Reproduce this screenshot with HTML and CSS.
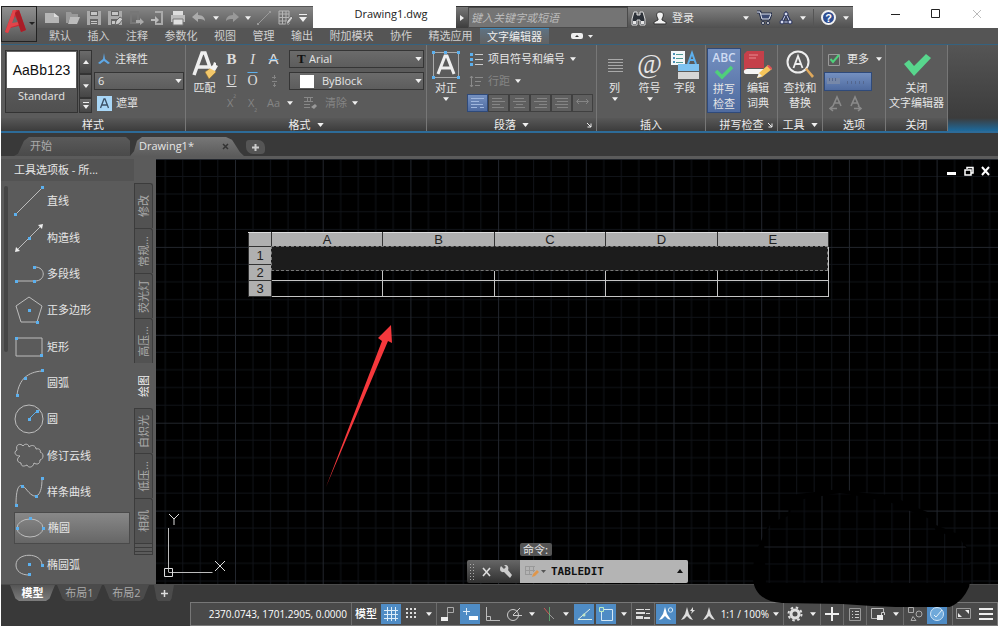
FILE: index.html
```html
<!DOCTYPE html>
<html lang="zh-CN">
<head>
<meta charset="utf-8">
<title>Drawing1.dwg</title>
<link rel="stylesheet" href="styles.css">
</head>
<body>
<svg class="defs" width="0" height="0" aria-hidden="true">
  <symbol id="caret" viewBox="0 0 8 5"><path d="M0 0h8L4 5z" fill="#f0f0f0"/></symbol>
  <symbol id="launch" viewBox="0 0 6 6"><path d="M1 1l4 4M5 1.500V5H1.500" stroke="#eee" fill="none"/></symbol>
</svg>
<div class="app">
  <header class="top">
    <button class="logo" aria-label="应用程序菜单">
      <svg width="34" height="34" viewBox="0 0 34 34"><path d="M3 25L11 3h6l7 20-5 2-2-6-9 2-2 5z" fill="#c92a33"/><path d="M11 3h3l-3 12 6-2 2 4-10 3-3 6-3-1z" fill="#e2444a"/><path d="M13 9l-3 7 6-1z" fill="#6b6b6b"/><path d="M17 3l7 20-5 2-6-19z" fill="#a91d27"/><path d="M27 15h6l-3 3z" fill="#222"/></svg>
    </button>
    <div class="top-rows">
      <div class="titlebar">
        <div class="qat">
          <button aria-label="新建"><svg width="16" height="16"><path d="M1 3h9l5 4v6H1z" fill="#b5b5b5"/><path d="M10 3v4h5" fill="#ddd"/></svg></button>
          <button aria-label="打开"><svg width="16" height="16"><path d="M1 2h5l1 2h6v3H5l-2 6H1z" fill="#999"/><path d="M5 7h10l-3 7H3z" fill="#bbb"/></svg></button>
          <button aria-label="保存"><svg width="16" height="16"><path d="M1 1h14v14H1z" fill="#aaa"/><path d="M4 1h8v5H4zM4 9h8v6H4z" fill="#666"/><path d="M5 2h6v3H5zM5 11h6v1H5zM5 13h6v1H5z" fill="#c5c5c5"/></svg></button>
          <button aria-label="另存为"><svg width="16" height="16"><path d="M1 1h14v14H1z" fill="#aaa"/><path d="M4 1h8v5H4zM4 9h8v6H4z" fill="#666"/><path d="M5 2h6v3H5zM5 11h3v3H5z" fill="#c5c5c5"/><path d="M8 15l1-4 4-4 3 2-4 5z" fill="#ccc" stroke="#666"/></svg></button>
          <button aria-label="从移动设备打开"><svg width="16" height="16"><path d="M3 2h7v11H3z" fill="none" stroke="#777" stroke-width="2"/><path d="M8 10h4V8l4 4-4 3v-2H8z" fill="#aaa"/></svg></button>
          <button aria-label="保存到移动设备"><svg width="16" height="16"><path d="M6 2h7v12H6" fill="none" stroke="#aaa" stroke-width="2"/><path d="M2 9h4V6l4 4-4 4v-3H2z" fill="#bbb"/></svg></button>
          <button aria-label="打印"><svg width="16" height="16"><path d="M3 1h10v5H3z" fill="#ddd"/><path d="M1 5h14v7H1z" fill="#bcbcbc"/><path d="M3 9h10v6H3z" fill="#e0e0e0" stroke="#777"/></svg></button>
          <button aria-label="放弃"><svg width="16" height="16"><path d="M1 7l6-5v3c5 0 7 3 7 6-2-2-4-2-7-2v3z" fill="#aaa"/></svg></button>
          <svg class="c6"><use href="#caret"/></svg>
          <button aria-label="重做"><svg width="16" height="16"><path d="M15 7L9 2v3C4 5 2 8 2 11c2-2 4-2 7-2v3z" fill="#999"/></svg></button>
          <svg class="c6"><use href="#caret"/></svg>
          <button aria-label="直线"><svg width="16" height="16"><path d="M2 14L14 2" stroke="#999"/><path d="M1 13h2v2H1zM13 1h2v2h-2z" fill="#999"/></svg></button>
          <button aria-label="表格"><svg width="16" height="16"><path d="M2 1h10v13H2zM2 4h10M2 7.500h10M2 11h10M5.500 1v13M9 1v13" fill="none" stroke="#b5b5b5"/><path d="M9 15l1-4 4-5 2 2-4 5z" fill="#ccc" stroke="#666"/></svg></button>
          <button aria-label="自定义"><svg width="10" height="12"><path d="M1 2h8v1H1zM1 5h8L5 10z" fill="#eee"/></svg></button>
        </div>
        <div class="doc-title">Drawing1.dwg</div>
        <div class="search">
          <button class="search-open" aria-label="展开"><svg width="5" height="8"><path d="M0 1l4 3-4 3z" fill="#eee"/></svg></button>
          <input type="text" aria-label="搜索" placeholder="键入关键字或短语">
        </div>
        <div class="account">
          <button aria-label="查找"><svg width="15" height="16"><path d="M3 2h3v3h3V2h3l2 7v6H9v-5H6v5H1V9z" fill="#2c3138" stroke="#ddd"/><path d="M2 11h3v3H2zM10 11h3v3h-3z" fill="#e5e5e5"/></svg></button>
          <button class="login"><svg width="14" height="14"><path d="M7 1c3 0 4 2 3 5L9 8v1l4 2v2H1v-2l4-2V8L4 6C3 3 4 1 7 1z" fill="#f3f3f3" stroke="#333"/></svg>登录</button>
          <svg class="c6 login-caret"><use href="#caret"/></svg>
          <button aria-label="商店"><svg width="16" height="16"><path d="M1 2h3l2 7h7l2-5H5" fill="#9faac5" stroke="#222c49" stroke-width="3"/><path d="M1 2h3l2 7h7l2-5H5" fill="#3c4a72" stroke="#e3e7f0"/><circle cx="7" cy="13" r="1.500" fill="#eee" stroke="#222c49"/><circle cx="12" cy="13" r="1.500" fill="#eee" stroke="#222c49"/></svg></button>
          <button aria-label="应用"><svg width="14" height="14"><path d="M7 3l4 8H3z" fill="none" stroke="#28325a" stroke-width="3"/><path d="M7 3l4 8H3z" fill="none" stroke="#d7dcf0"/><circle cx="7" cy="3" r="2" fill="#d7dcf0" stroke="#28325a"/><circle cx="3" cy="11" r="2" fill="#d7dcf0" stroke="#28325a"/><circle cx="11" cy="11" r="2" fill="#d7dcf0" stroke="#28325a"/></svg></button>
          <svg class="c6"><use href="#caret"/></svg>
          <span class="vline"></span>
          <button aria-label="帮助"><svg width="15" height="15"><circle cx="7.500" cy="7.500" r="6.500" fill="#2e4d92" stroke="#f2f2f2" stroke-width="2"/><text x="7.500" y="11.500" text-anchor="middle" class="qmark">?</text></svg></button>
          <svg class="c6"><use href="#caret"/></svg>
        </div>
        <div class="winbtns">
          <button aria-label="最小化"><svg width="10" height="10"><path d="M1 5.500h9" stroke="#222"/></svg></button>
          <button aria-label="最大化"><svg width="10" height="10"><path d="M.5.500h8v8h-8z" fill="none" stroke="#222"/></svg></button>
          <button aria-label="关闭"><svg width="10" height="10"><path d="M1 1l8 8M9 1L1 9" stroke="#bbb"/></svg></button>
        </div>
      </div>
      <nav class="menu">
        <div class="menu-tabs"><button>默认</button><button>插入</button><button>注释</button><button>参数化</button><button>视图</button><button>管理</button><button>输出</button><button>附加模块</button><button>协作</button><button>精选应用</button><button class="active">文字编辑器</button></div>
        <button aria-label="最小化功能区"><svg width="22" height="8"><rect x="0" y="1" width="12" height="6" rx="2" fill="#eee"/><path d="M4 5l2-2 2 2z" fill="#333"/><path d="M17 3h5l-2.500 3z" fill="#eee"/></svg></button>
      </nav>
    </div>
  </header>

  <section class="ribbon">
    <div class="panel p-style">
      <div class="panel-body">
        <div class="preview"><span class="sample">AaBb123</span><span class="sample-name">Standard</span></div>
        <div class="spin">
          <button aria-label="上一个"><svg width="8" height="5"><path d="M1 4h6L4 0z" fill="#eee"/></svg></button>
          <button aria-label="下一个"><svg class="c6"><use href="#caret"/></svg></button>
          <button class="short" aria-label="更多"><svg width="8" height="8"><path d="M1 0h6v1H1zM1 3h6L4 7z" fill="#eee"/></svg></button>
        </div>
        <div class="stack style-opts">
          <button class="row"><svg width="14" height="14"><path d="M7 1l1 6 5 4-2 1-4-3-4 3-2-1 5-4z" fill="#5fa8e6"/></svg>注释性</button>
          <div class="combo"><select aria-label="文字高度"><option>6</option></select><svg class="c8 drop"><use href="#caret"/></svg></div>
          <button class="row"><svg width="15" height="15"><rect width="15" height="15" fill="#a9d7f7"/><path d="M3.500 12L7 3h1l3.500 9M5 9h5" fill="none" stroke="#3c5166" stroke-width="1.300"/></svg>遮罩</button>
        </div>
      </div>
      <h2>样式</h2>
    </div>
    <div class="panel p-format">
      <div class="panel-body">
        <button class="big match"><svg width="28" height="30"><path d="M3 25L11 3h3l7 20M7 17h11" fill="none" stroke="#eee" stroke-width="3.500"/><path d="M14 22l7-5 4 5-7 7z" fill="#f2c76a" stroke="#8a6a2b" stroke-width=".5"/><path d="M18 18l4-3 1-3 2 1v2l2 1-3 5z" fill="#f4f4f4"/></svg>匹配</button>
        <div class="glyphs">
          <button class="serif b">B</button><button class="serif i">I</button><button class="serif s">A</button>
          <button class="serif u">U</button><button class="serif o">O</button><button class="dim" aria-label="堆叠"><svg width="10" height="14"><path d="M5.500 1v4M3 3.500h4M5.500 9v4M3 7.500h5M4 11.500h3" stroke="#858585"/></svg></button>
          <button class="dim">X<sup>²</sup></button><button class="dim">X<sub>₂</sub></button><button class="dim case">Aa</button>
        </div>
        <div class="stack fonts">
          <div class="combo font-name"><select aria-label="字体"><option>Arial</option></select><b class="serif mark">T</b><svg class="c8 drop"><use href="#caret"/></svg></div>
          <div class="combo colour"><select aria-label="颜色"><option>ByBlock</option></select><i class="swatch mark"></i><svg class="c8 drop"><use href="#caret"/></svg></div>
          <button class="row dim clear"><svg class="c6"><use href="#caret"/></svg><svg width="15" height="14"><path d="M1 1.500h9M1 5.500h9M1 8.500h6M1 11.500h6M4.500 2v3M7.500 2v3" stroke="#888"/><path d="M8 11l4-3 2 2-3 3z" fill="#999"/></svg>清除<svg class="c6"><use href="#caret"/></svg></button>
        </div>
      </div>
      <h2>格式 <svg class="c8"><use href="#caret"/></svg></h2>
    </div>
    <div class="panel p-para">
      <div class="panel-body">
        <button class="big"><svg width="30" height="30"><path d="M2.500 2.500h25v25h-25z" fill="none" stroke="#aaa"/><path d="M7 24L14 6h2l7 18M10 18h10" fill="none" stroke="#eee" stroke-width="3"/><path d="M1 1h3v3H1zM13 1h3v3h-3zM26 1h3v3h-3zM1 26h3v3H1zM26 26h3v3h-3z" fill="#5cb0ee"/></svg>对正<svg class="c6"><use href="#caret"/></svg></button>
        <div class="stack para-opts">
          <button class="row"><svg width="14" height="13"><path d="M1 0h3v3H1zM1 5h3v3H1zM1 10h3v3H1z" fill="#5cb0ee"/><path d="M6 1.500h8M6 6.500h8M6 11.500h8" stroke="#ccc"/></svg>项目符号和编号<svg class="c6"><use href="#caret"/></svg></button>
          <button class="row dim"><svg width="14" height="13"><path d="M2.500 1v11M1 3l1.500-2L4 3M1 10l1.500 2L4 10M6 2.500h8M6 6.500h6M6 10.500h5" stroke="#8b8b8b" fill="none"/></svg>行距<svg class="c6"><use href="#caret"/></svg></button>
          <div class="aligns">
            <button class="on" aria-label="默认"><svg width="15" height="12"><path d="M1 1.500h13M1 4.500h8M1 7.500h12M1 10.500h6M10 10.500h4" stroke="#9fb6dd"/></svg></button>
            <button aria-label="左对齐"><svg width="15" height="12"><path d="M1 1.500h10M1 4.500h13M1 7.500h8M1 10.500h12" stroke="#858585"/></svg></button>
            <button aria-label="居中"><svg width="15" height="12"><path d="M3 1.500h9M1 4.500h13M4 7.500h7M2 10.500h11" stroke="#858585"/></svg></button>
            <button aria-label="右对齐"><svg width="15" height="12"><path d="M4 1.500h10M1 4.500h13M6 7.500h8M2 10.500h12" stroke="#858585"/></svg></button>
            <button aria-label="两端对齐"><svg width="15" height="12"><path d="M1 1.500h13M3 4.500h11M1 7.500h13M3 10.500h11" stroke="#858585"/></svg></button>
            <button aria-label="分散对齐"><svg width="15" height="12"><path d="M2 4.500h11M4 2L1.500 4.500 4 7M11 2l2.500 2.500L11 7" fill="none" stroke="#858585"/></svg></button>
          </div>
        </div>
      </div>
      <h2>段落 <svg class="c8"><use href="#caret"/></svg><svg class="launch"><use href="#launch"/></svg></h2>
    </div>
    <div class="panel p-insert">
      <div class="panel-body">
        <button class="big w36"><svg width="30" height="30"><path d="M8 9.500h15M8 12.500h15M8 15.500h15M8 18.500h15M8 21.500h15" stroke="#a9a9a9"/></svg>列<svg class="c6"><use href="#caret"/></svg></button>
        <button class="big w36"><span class="at">@</span>符号<svg class="c6"><use href="#caret"/></svg></button>
        <button class="big w36"><svg width="30" height="30"><path d="M1 1h14v14H1z" fill="#f3f6f8"/><path d="M3 3h2v2H3zM3 7h2v2H3zM3 11h2v2H3z" fill="#4a90b8"/><path d="M6 4.500h7M6 8.500h7M6 12.500h7" stroke="#4e9a94"/><path d="M18 14l4-11 4 11M19.500 10h5" fill="none" stroke="#5cb0ee" stroke-width="2"/><path d="M8 14h21v7H8z" fill="#7ec3f2"/><path d="M8 22h21v7H8z" fill="#d6d6d6"/></svg>字段</button>
      </div>
      <h2>插入</h2>
    </div>
    <div class="panel p-spell">
      <div class="panel-body">
        <button class="big on w34"><span class="abc">ABC</span><svg width="20" height="16"><path d="M2 6l6 6L18 2" fill="none" stroke="#4fd07b" stroke-width="3.500"/></svg>拼写<br>检查</button>
        <button class="big w34"><svg width="30" height="30"><path d="M4 1h17v17H4L1 23V4z" fill="#c5404a"/><path d="M4 19h17v5H3c-3 0-3-5 1-5z" fill="#f5f5f5"/><path d="M6 5h9M6 8h7" stroke="#e98a8f"/><path d="M14 28l2-5 9-8 4 4-10 8z" fill="#f6c65b"/><path d="M24 16l2-1 3 3-1 2z" fill="#e2505a"/><path d="M14 28l2-5 3 3z" fill="#eee"/></svg>编辑<br>词典</button>
      </div>
      <h2>拼写检查<svg class="launch"><use href="#launch"/></svg></h2>
    </div>
    <div class="panel p-tools">
      <div class="panel-body">
        <button class="big"><svg width="30" height="30"><circle cx="13" cy="12" r="10.500" fill="none" stroke="#eee" stroke-width="2"/><path d="M8.500 18L13 6l4.500 12M10 14h6" fill="none" stroke="#eee" stroke-width="1.800"/><path d="M20 19l2-1 7 8-2 2z" fill="#e0a95b"/></svg>查找和<br>替换</button>
      </div>
      <h2>工具 <svg class="c8"><use href="#caret"/></svg></h2>
    </div>
    <div class="panel p-opts">
      <div class="panel-body">
        <div class="stack">
          <button class="row more"><svg width="12" height="13"><path d="M.5 1.500h11v11H.5z" fill="none" stroke="#999"/><path d="M2.500 6L5 9l6-7" fill="none" stroke="#4fd07b" stroke-width="2"/></svg>更多<svg class="c6"><use href="#caret"/></svg></button>
          <button class="ruler" aria-label="标尺"><svg width="42" height="12"><path d="M0 2h13v6H0z" fill="#7788a8"/><path d="M2.500 2v3M5.500 2v3M8.500 2v3M20.500 5v3M24.500 5v3M28.500 5v3M32.500 5v3M36.500 5v3" stroke="#54678f"/></svg></button>
          <div class="aa"><button aria-label="放弃"><svg width="14" height="17"><path d="M4 11L8 2l4 9M5 8h6M1 13.500h7M4 11l-3 2.500L4 16" fill="none" stroke="#8b8b8b" stroke-width="1.600"/></svg></button><button aria-label="重做"><svg width="14" height="17"><path d="M2 11L6 2l4 9M3 8h6M5 13.500h7M9 11l3 2.500L9 16" fill="none" stroke="#8b8b8b" stroke-width="1.600"/></svg></button></div>
        </div>
      </div>
      <h2>选项</h2>
    </div>
    <div class="panel p-close">
      <div class="panel-body">
        <button class="big"><svg width="30" height="30"><path d="M2 14l5-4 5 6L24 4l5 4-17 18z" fill="#58d68d"/></svg>关闭<br>文字编辑器</button>
      </div>
      <h2>关闭</h2>
    </div>
  </section>

  <nav class="file-tabs">
    <button class="ftab start">开始</button>
    <button class="ftab current">Drawing1*<svg width="7" height="7"><path d="M1 1l5 5M6 1L1 6" stroke="#333" stroke-width="1.500"/></svg></button>
    <button class="ftab add" aria-label="新图形"><svg width="9" height="9"><path d="M4.500 1v7M1 4.500h7" stroke="#ccc" stroke-width="2"/></svg></button>
  </nav>

  <main class="work">
    <aside class="palette">
      <h3>工具选项板 - 所...</h3>
      <div class="palette-body">
        <div class="scroll"></div>
        <ul class="tools">
          <li><button><svg viewBox="0 0 30 30"><path d="M2 28L28 2" class="ln"/><path d="M0 27h3v3H0zM27 0h3v3h-3z" class="dt"/></svg>直线</button></li>
          <li><button><svg viewBox="0 0 30 30"><path d="M3 27L27 3" class="ln"/><path d="M29 1l-1 5-4-4zM1 29l1-5 4 4z" fill="#eee"/><path d="M14 14h3v3h-3z" class="dt"/></svg>构造线</button></li>
          <li><button><svg viewBox="0 0 30 30"><path d="M2 22h19M21 8c11 0 11 14 0 14" class="ln"/><path d="M1 21h3v3H1zM19 21h3v3h-3zM19 7h3v3h-3z" class="dt"/></svg>多段线</button></li>
          <li><button><svg viewBox="0 0 30 30"><path d="M15 2l13 9-5 16H7L2 11z" class="ln"/><path d="M14 14h3v3h-3zM22 26h3v3h-3z" class="dt"/></svg>正多边形</button></li>
          <li><button><svg viewBox="0 0 30 30"><path d="M2 6h26v18H2z" class="ln"/><path d="M1 5h3v3H1zM26 22h3v3h-3z" class="dt"/></svg>矩形</button></li>
          <li><button><svg viewBox="0 0 30 30"><path d="M3 27C5 11 14 4 28 3" class="ln"/><path d="M2 26h3v3H2zM10 9h3v3h-3zM27 1h3v3h-3z" class="dt"/></svg>圆弧</button></li>
          <li><button><svg viewBox="0 0 30 30"><circle cx="15" cy="15" r="14" class="ln"/><path d="M15 15l8-8" stroke="#5cb0ee"/><path d="M14 14h3v3h-3zM22 6h3v3h-3z" class="dt"/></svg>圆</button></li>
          <li><button><svg viewBox="0 0 30 30"><path d="M6 15c-6 0-6-5-3-6-2-6 4-7 6-4 2-3 6-2 6 1 3-3 7-1 7 2 4-1 5 2 4 3 4 1 4 7 0 8 0 4-3 5-6 3-1 5-6 5-7 2-4 2-6 1-6-2-5-1-4-5-1-7z" class="ln"/></svg>修订云线</button></li>
          <li><button><svg viewBox="0 0 30 30"><path d="M2 28C2 4 8 7 12 12c4 5 8 9 12 6 3-3 4-9 4-16" class="ln"/><path d="M1 27h3v3H1zM7 8h3v3H7zM21 18h3v3h-3zM27 0h3v3h-3z" class="dt"/></svg>样条曲线</button></li>
          <li class="sel"><button><svg viewBox="0 0 30 30"><ellipse cx="15" cy="15" rx="13" ry="9" class="ln"/><path d="M1 14h3v3H1zM27 14h3v3h-3zM14 4h3v3h-3z" class="dt"/></svg>椭圆</button></li>
          <li><button><svg viewBox="0 0 30 30"><path d="M28 15C28 2 2 2 2 15c0 6 5 10 13 10" class="ln"/><path d="M14 13h3v3h-3zM27 14h3v3h-3zM14 23h3v3h-3z" class="dt"/></svg>椭圆弧</button></li>
        </ul>
        <div class="vtabs">
          <button><span>修改</span></button><button><span>常规...</span></button><button><span>荧光灯</span></button><button><span>高压...</span></button><button class="active"><span>绘图</span></button><button><span>白炽光</span></button><button><span>低压...</span></button><button><span>相机</span></button>
          <i></i><i></i><i></i>
        </div>
      </div>
    </aside>
    <section class="canvas">
      <svg class="grid" width="100%" height="100%">
        <defs><pattern id="g" x="79" y="0" width="87.700" height="87.900" patternUnits="userSpaceOnUse">
          <path d="M18 0v88M35.500 0v88M53 0v88M70.500 0v88M0 17.500h88M0 35h88M0 52.700h88M0 70.300h88" stroke="#101318"/><path d="M.5 0v88M0 .5h88" stroke="#22262d"/>
        </pattern></defs>
        <rect width="100%" height="100%" fill="url(#g)"/>
        <path d="M170 328L226 182l-4-3 13-13 1 18-4-2z" fill="#f5383c"/>
        <path d="M12.500 369v44M12.500 413.500h44" stroke="#bbb"/><path d="M8.500 409.500h8v8h-8z" fill="none" stroke="#ddd"/><path d="M59 402l10 10M69 402l-10 10M13 355l5 5 5-5M18 360v6" fill="none" stroke="#ddd"/>
      </svg>
      <div class="viewbtns">
        <button aria-label="最小化视口"><svg width="10" height="10"><path d="M0 6h9v3H0z" fill="#fff"/></svg></button>
        <button aria-label="还原视口"><svg width="10" height="10"><path d="M1 4h6v5H1zM3 3V1.500h6V7H7" fill="none" stroke="#fff" stroke-width="1.500"/></svg></button>
        <button aria-label="关闭视口"><svg width="10" height="10"><path d="M1 1l7 8M8 1L1 9" stroke="#fff" stroke-width="2"/></svg></button>
      </div>
      <table class="sheet">
        <thead><tr><th class="num"></th><th>A</th><th>B</th><th>C</th><th>D</th><th>E</th></tr></thead>
        <tbody>
          <tr class="r1"><th>1</th><td colspan="5"><div class="merged"></div></td></tr>
          <tr><th>2</th><td></td><td></td><td></td><td></td><td></td></tr>
          <tr><th>3</th><td></td><td></td><td></td><td></td><td></td></tr>
        </tbody>
      </table>
      <div class="cmd-hint">命令:</div>
      <div class="cmd">
        <svg class="grip" width="8" height="18"><path d="M1.500 1v16M4.500 1v16" stroke="#aaa" stroke-dasharray="1 2"/></svg>
        <button aria-label="关闭命令行"><svg width="10" height="10"><path d="M1 1l7 8M8 1L1 9" stroke="#ddd" stroke-width="1.600"/></svg></button>
        <button aria-label="自定义命令行"><svg width="14" height="14"><path d="M2 1l3 3 2-2-2-2c4-1 5 3 4 5l4 5-2 3-6-6C1 8 0 4 2 1z" fill="#ccc"/></svg></button>
        <div class="cmd-field">
          <svg width="22" height="14"><path d="M1 1.500h10M1 5.500h10M1 9.500h7M1.500 1v9M5.500 1v9M9.500 1v6" stroke="#999"/><path d="M8 12l1-3 4-4 2 2-4 4z" fill="#e0964a"/><path d="M17 5h5l-2.500 3z" fill="#555"/></svg>
          <input type="text" aria-label="命令" value="TABLEDIT">
          <svg width="8" height="5"><path d="M1 4h6L4 0z" fill="#111"/></svg>
        </div>
      </div>
      <svg class="blot" width="222" height="118" viewBox="0 0 222 118">
        <defs><pattern id="g2" x="69.500" y="57.500" width="87.700" height="87.900" patternUnits="userSpaceOnUse"><path d="M18 0v88M35.500 0v88M53 0v88M70.500 0v88M0 17.500h88M0 35h88M0 52.700h88M0 70.300h88" stroke="#0d1015"/><path d="M.5 0v88M0 .5h88" stroke="#1d2026"/></pattern></defs>
        <path d="M2 66L10 50l6-14 20-10 2-20 50-6 24 4 28 2 18 10 20 8 6 12 24 10 8 14 3 28-2 10c-5 11-12 19-26 22L120 117l-30-2-60-1C12 113 2 104 1 90z" fill="#000"/>
        <path d="M12 50l6-14 20-10 2-14 48-8 24 4 28 6 18 8 20 8 6 12 24 8 10 14v30H14z" fill="url(#g2)"/>
      </svg>
    </section>
  </main>

  <footer class="bottom">
    <nav class="layouts"><button class="active">模型</button><button>布局1</button><button>布局2</button><button class="plus" aria-label="新建布局"><svg width="9" height="9"><path d="M4.500 1v7M1 4.500h7" stroke="#ddd" stroke-width="1.500"/></svg></button></nav>
    <div class="status">
      <span class="coords">2370.0743, 1701.2905, 0.0000</span>
      <button class="model">模型</button>
      <button class="on" aria-label="栅格"><svg width="16" height="16"><path d="M4.500 1v14M8.500 1v14M12.500 1v14M1 4.500h14M1 8.500h14M1 12.500h14" stroke="#dcecf8"/></svg></button>
      <button class="n" aria-label="捕捉"><svg width="14" height="14"><path d="M2 1v12M6 1v12M10 1v12" stroke="#ddd" stroke-width="2" stroke-dasharray="2 2"/></svg></button>
      <button class="car" aria-label="捕捉设置"><svg class="c6"><use href="#caret"/></svg></button><i></i>
      <button aria-label="推断约束"><svg width="16" height="16"><path d="M1 11h7v4H1z" fill="#eee"/><path d="M7.500 11V1.500h6v5h-6" fill="none" stroke="#aaa"/></svg></button>
      <button class="on" aria-label="动态输入"><svg width="16" height="16"><path d="M4.500 2v7M1 5.500h7" stroke="#dcecf8"/><path d="M7 10h9v4H7z" fill="#fff"/></svg></button>
      <button aria-label="正交"><svg width="16" height="16"><path d="M2.500 1v13.500H16M2.500 10.500h4v4" fill="none" stroke="#bbb"/></svg></button>
      <button aria-label="极轴"><svg width="16" height="16"><circle cx="7" cy="9" r="5.500" fill="none" stroke="#ccc"/><path d="M7 9l7-7M7 9.500h9" stroke="#ccc"/></svg></button>
      <button class="car" aria-label="极轴设置"><svg class="c6"><use href="#caret"/></svg></button>
      <button class="n" aria-label="等轴测"><svg width="16" height="16"><path d="M3 2l5 6" stroke="#c55"/><path d="M8.500 1v14" stroke="#5a9c6a"/><path d="M8 8l5 5" stroke="#999"/></svg></button>
      <button class="car" aria-label="等轴测设置"><svg class="c6"><use href="#caret"/></svg></button>
      <button class="on" aria-label="对象追踪"><svg width="16" height="16"><path d="M14 3L2 13.500h14" fill="none" stroke="#e2f0e4"/><circle cx="8" cy="9" r="1.500" fill="#bfe6c5"/></svg></button>
      <button class="on" aria-label="对象捕捉"><svg width="16" height="16"><path d="M3.500 3.500h11v11h-11z" fill="none" stroke="#d5e8f5"/><path d="M1.500 1.500h4v4h-4z" fill="#5a93c9" stroke="#b9ecc0"/></svg></button>
      <button class="car" aria-label="捕捉选项"><svg class="c6"><use href="#caret"/></svg></button><i></i>
      <button aria-label="线宽"><svg width="16" height="14"><path d="M1 2h8v1H1zM1 5h9v2H1zM1 9h7v3H1zM10 2h5v1h-5zM11 6h4v1h-4zM9 10h6v2H9z" fill="#ddd"/></svg></button><i></i>
      <button class="on" aria-label="注释可见性"><svg width="16" height="16"><path d="M7 1l2 7 4 6-3-1-3-3-3 3-3 1 4-6z" fill="#fff"/><circle cx="12.500" cy="4" r="2.200" fill="none" stroke="#d5e8f5"/></svg></button>
      <button aria-label="自动缩放"><svg width="16" height="16"><path d="M7 1l2 7 4 6-3-1-3-3-3 3-3 1 4-6z" fill="#ddd"/><path d="M13 1l-3 4h2l-1 3 4-4h-2z" fill="#ddd"/></svg></button>
      <button class="n" aria-label="注释"><svg width="16" height="16"><path d="M8 1l2 7 4 6-3-1-3-3-3 3-3 1 4-6z" fill="#ddd"/></svg></button>
      <span class="scale">1:1 / 100%</span>
      <button class="car" aria-label="比例"><svg class="c6"><use href="#caret"/></svg></button><i></i>
      <button aria-label="设置"><svg width="16" height="16"><circle cx="8" cy="8" r="4" fill="none" stroke="#ddd" stroke-width="3"/><circle cx="8" cy="8" r="6.500" fill="none" stroke="#ddd" stroke-width="2" stroke-dasharray="2.500 2.600"/></svg></button>
      <button class="car" aria-label="设置选项"><svg class="c6"><use href="#caret"/></svg></button><i></i>
      <button aria-label="注释监视器"><svg width="14" height="14"><path d="M7 0v14M0 7h14" stroke="#eee" stroke-width="2"/></svg></button><i></i>
      <button aria-label="快捷特性"><svg width="14" height="16"><path d="M1.500 2.500h11v12h-11z" fill="none" stroke="#999"/><path d="M4 5.500h1M4 8.500h1M4 11.500h1M7 5.500h4M7 8.500h4M7 11.500h4" stroke="#ccc"/></svg></button><i></i>
      <button aria-label="锁定界面"><svg width="16" height="16"><path d="M7 12.500H1.500v-10h12v4" fill="none" stroke="#bbb"/><path d="M7 9h6v5H7z" fill="#eee"/><path d="M11.500 9V6.500h3V9" fill="none" stroke="#ccc"/></svg></button>
      <button class="car" aria-label="锁定选项"><svg class="c6"><use href="#caret"/></svg></button><i></i>
      <button aria-label="隔离对象"><svg width="16" height="16"><path d="M1.500 1.500h5v5h-5zM4 14.500l2-4 3 4z" fill="none" stroke="#aaa"/><circle cx="12" cy="8" r="3" fill="none" stroke="#aaa"/></svg></button>
      <button class="on" aria-label="硬件加速"><svg width="16" height="16"><circle cx="8" cy="8" r="6.500" fill="#6fa9da" stroke="#cfe4f5"/><path d="M5 9l2 2 6-7" fill="none" stroke="#e6f2fa"/></svg></button>
      <span class="end"><button aria-label="全屏"><svg width="16" height="14"><path d="M.5 1.500h14v10H.5z" fill="none" stroke="#999"/><path d="M9 3h4v4zM2 6v4h4z" fill="#eee"/></svg></button><button aria-label="自定义"><svg width="16" height="14"><path d="M1 2h14M1 7h14M1 12h14" stroke="#eee" stroke-width="2"/></svg></button></span>
    </div>
  </footer>
</div>
</body>
</html>
```

FILE: styles.css
```css
* { box-sizing: border-box; }
body { margin: 0; background: #fff; font: 11px/14px "Open Sans", "Noto Sans CJK SC", sans-serif; color: #e6e6e6; }
button { font: inherit; color: inherit; background: none; border: 0; padding: 0; margin: 0; display: flex; align-items: center; justify-content: center; white-space: nowrap; }
input, select { font: inherit; color: inherit; margin: 0; border-radius: 0; outline: 0; }
h2, h3 { margin: 0; font: inherit; }
svg { display: block; flex: none; }
.defs { position: absolute; }
.c6 { width: 6px; height: 4px; }
.c8 { width: 7px; height: 4px; }
.serif { font-family: "Liberation Serif", serif; }
.dim { color: #858585; }

.app { height: 100vh; min-height: 600px; padding: 6px 2px 1px 1px; display: flex; flex-direction: column; }

/* Title bar and menu */
.top { display: flex; flex: none; background: #555; }
.logo { width: 36px; height: 36px; border: 1px solid #222; background: linear-gradient(#909090, #565656); }
.top-rows { flex: 1; min-width: 0; }
.titlebar { display: flex; height: 22px; background: #fff; }
.qat { width: 276px; padding: 0 5px 0 7px; display: flex; align-items: center; justify-content: space-between; background: linear-gradient(#858585, #5b5b5b); border-top: 1px solid #555; }
.doc-title { flex: 1; display: flex; align-items: center; justify-content: center; padding: 0 0 6px 13px; font-size: 11px; color: #222; }
.search { display: flex; width: 172px; background: #4c4c4c; border-top: 1px solid #333; }
.search-open { width: 12px; background: linear-gradient(#777, #3c3c3c); }
.search input { flex: 1; min-width: 0; border: 1px solid #4a4a4a; background: #747474; padding: 0 2px; }
.search input::placeholder { color: #bbb; font-style: italic; opacity: 1; }
.account { display: flex; align-items: center; width: 225px; padding: 0 4px 0 3px; gap: 7px; background: linear-gradient(#808080, #505050); border-top: 1px solid #444; }
.login { gap: 5px; }
.login-caret { margin-left: auto; }
.vline { width: 1px; height: 18px; background: #555; }
.qmark { font: bold 11px "Liberation Sans", sans-serif; fill: #fff; }
.winbtns { display: flex; width: 145px; padding-left: 21px; }
.winbtns button { flex: 1; padding-bottom: 6px; }
.menu { display: flex; height: 16px; gap: 22px; padding-left: 12px; align-items: stretch; background: #555; color: #d0d0d0; }
.menu-tabs { width: 500px; display: flex; justify-content: space-between; }
.menu .active { margin-left: -9px; padding: 0 7px; color: #eee; border-top: 1px solid #3f86b5; background: linear-gradient(#5f7282, #626262); }

/* Ribbon */
.ribbon { flex: none; display: flex; height: 89px; border-top: 1px solid #35627f; border-bottom: 2px solid #2d6b98; background: linear-gradient(#555, #3c3c3c 85%, #1d6a9d); }
.panel { flex: none; display: flex; flex-direction: column; border-right: 1px solid #777; background: #5b5b5b; }
.panel-body { flex: 1; display: flex; min-height: 0; padding: 5px 0 0 4px; }
.panel h2 { flex: none; height: 13px; line-height: 13px; position: relative; display: flex; align-items: center; justify-content: center; gap: 6px; background: linear-gradient(#585858, #3c3c3c); color: #eee; }
.launch { position: absolute; right: 4px; top: 4px; width: 6px; height: 6px; }
.p-style { width: 185px; }
.p-format { width: 241px; }
.p-para { width: 170px; }
.p-insert { width: 109px; }
.p-spell { width: 72px; }
.p-tools { width: 45px; }
.p-opts { width: 63px; }
.p-close { width: 62px; }
.p-close .panel-body, .p-tools .panel-body { justify-content: center; padding-left: 0; }
.preview { width: 73px; height: 63px; border: 1px solid #333; display: flex; flex-direction: column; text-align: center; background: linear-gradient(#666, #505050); }
.sample { height: 36px; line-height: 36px; margin: 1px 1px 0; background: #fff; color: #111; font-family: "Liberation Sans", sans-serif; font-size: 14px; }
.sample-name { line-height: 16px; }
.spin { width: 13px; display: flex; flex-direction: column; margin-left: 1px; }
.spin button { height: 24px; border: 1px solid #333; background: linear-gradient(#6b6b6b, #454545); }
.spin .short { height: 15px; }
.stack { display: flex; flex-direction: column; gap: 4px; }
.row { height: 18px; gap: 4px; justify-content: flex-start; }
.style-opts { width: 90px; margin-left: 2px; }
.style-opts .row { padding-left: 3px; }
.combo { position: relative; display: flex; height: 18px; background: linear-gradient(#6c6c6c, #5c5c5c); }
.combo select { flex: 1; appearance: none; border: 1px solid #353535; padding: 0 3px; background: none; }
.combo.font-name select { padding-left: 19px; }
.combo.colour select { padding-left: 32px; }
.mark, .drop { position: absolute; pointer-events: none; }
.drop { right: 2px; top: 7px; }
.font-name .mark { left: 8px; top: 2px; font-size: 13px; color: #111; }
.swatch { left: 11px; top: 3px; width: 14px; height: 13px; background: #fff; }
.big { flex-direction: column; justify-content: flex-start; line-height: 15px; text-align: center; }
.big > .c6 { margin-top: 2px; }
.match { width: 29px; }
.glyphs { width: 66px; margin-left: 2px; display: grid; grid-template-columns: repeat(3, 21px); grid-template-rows: repeat(3, 18px); gap: 4px 0; }
.glyphs .serif { font-size: 15px; color: #ddd; }
.glyphs .b { font-weight: bold; }
.glyphs .i { font-style: italic; }
.glyphs .s { text-decoration: line-through #5cb0ee; font-family: "Liberation Sans", sans-serif; }
.glyphs .u { text-decoration: underline; font-size: 14px; }
.glyphs .o { text-decoration: overline #5cb0ee; font-size: 14px; }
sup, sub { font-size: 8px; line-height: 8px; }
sup { align-self: flex-start; }
sub { align-self: flex-end; }
.fonts { width: 135px; margin-left: 2px; }
.clear { gap: 7px; }
.clear .c6 { margin-left: -2px; }
.clear .c6:first-child { margin-right: 3px; }
.p-para .big { width: 30px; }
.para-opts { margin-left: 6px; }
.para-opts .row { padding-left: 2px; gap: 5px; }
.aligns { display: flex; }
.aligns button { width: 21px; height: 18px; border: 1px solid #404040; background: #5f5f5f; }
.aligns .on, .panel .big.on, .ruler { border: 1px solid #2f4a7a; background: linear-gradient(#7490c0, #4f6ba0); }
.w36 { width: 35px; }
.w34 { width: 34px; }
.p-insert .panel-body { padding-left: 0; }
.at { height: 30px; font: italic 27px/28px "Liberation Serif", serif; }
.p-spell .panel-body { padding: 3px 0 0 1px; }
.p-spell .big { height: 65px; padding-top: 2px; }
.abc { line-height: 14px; height: 14px; font-size: 12px; font-weight: 600; color: #cfdcf2; }
.p-opts .panel-body { padding-left: 1px; }
.more { padding-left: 4px; gap: 7px; }
.ruler { width: 48px; height: 19px; }
.aa { display: flex; gap: 6px; padding-left: 5px; }

/* Drawing file tabs */
.file-tabs { flex: none; display: flex; height: 26px; padding: 4px 0 0 13px; background: #393939; border-bottom: 3px solid #5b5b5b; }
.ftab { padding-bottom: 1px; justify-content: flex-start; }
.start { width: 116px; padding-left: 16px; background: linear-gradient(#5a5a5a, #4a4a4a); color: #aaa; clip-path: polygon(0 100%, 4px 88%, 10px 20%, 15px 0, 112px 0, 116px 20%, 116px 100%); }
.current { width: 114px; padding-left: 9px; gap: 28px; background: linear-gradient(#777, #5b5b5b); clip-path: polygon(0 100%, 4px 75%, 7px 20%, 12px 0, 96px 0, 102px 15%, 110px 80%, 114px 100%); }
.add { width: 19px; height: 14px; margin: 3px 0 0 2px; padding: 0; justify-content: center; background: #555; border-radius: 3px 7px 4px 7px; }

/* Tool palette */
.work { flex: 1; min-height: 0; display: flex; }
.palette { flex: none; width: 155px; display: flex; flex-direction: column; background: #5b5b5b; }
.palette h3 { width: 133px; height: 22px; padding: 1px 0 0 13px; line-height: 20px; background: #535353; }
.palette-body { flex: 1; min-height: 0; display: flex; padding-top: 2px; }
.scroll { width: 4px; height: 166px; margin: 3px 5px 0 3px; background: #454545; border-radius: 2px; }
.tools { list-style: none; margin: 0; padding: 0 0 1px; width: 118px; display: flex; flex-direction: column; }
.tools li { flex: 1; min-height: 0; display: flex; align-items: center; padding: 0 1px; }
.tools button { width: 100%; height: 32px; gap: 3px; justify-content: flex-start; }
.tools svg { width: 30px; height: 30px; }
.sel button { background: linear-gradient(#888, #666); border: 1px solid #4a4a4a; }
.ln { fill: none; stroke: #bdbdbd; }
.dt { fill: #5cb0ee; }
.vtabs { width: 19px; margin-left: 3px; display: flex; flex-direction: column; }
.vtabs button { height: 45px; border: 1px solid #3c3c3c; border-bottom: 0; background: #525252; color: #aaa; border-radius: 0 3px 0 0; }
.vtabs .active { border-color: transparent; background: none; color: #eee; }
.vtabs span { writing-mode: vertical-rl; text-orientation: sideways; transform: rotate(180deg); }
.vtabs i { height: 4px; border: 1px solid #3c3c3c; border-bottom: 0; }
.vtabs i:last-child { border-bottom: 1px solid #3c3c3c; }

/* Drawing area */
.canvas { flex: 1; position: relative; background: #000; }
.grid { position: absolute; inset: 0; }
.viewbtns { position: absolute; top: 7px; right: 7px; display: flex; gap: 7px; }
.sheet { position: absolute; left: 92px; top: 73px; width: 581px; border-collapse: collapse; table-layout: fixed; font: 13px/13px "Liberation Sans", sans-serif; }
.sheet th { padding: 0; height: 16px; font-weight: normal; background: #b0b0b0; color: #222; border: 1px solid #333; }
.sheet thead th { height: 14px; border-top-color: #ddd; }
.sheet .num { width: 23px; }
.sheet td { position: relative; padding: 0; border: 1px solid #c5c5c5; }
.sheet .r1 th { height: 18px; }
.merged { position: absolute; z-index: 1; left: -1px; right: 0; top: -1px; height: 25px; background: #1c1c1c; border: 1px dashed #777; }
.cmd-hint { position: absolute; left: 364px; bottom: 28px; width: 32px; height: 13px; padding-left: 3px; line-height: 13px; background: #555; border-radius: 2px; font-family: "Noto Sans CJK SC", sans-serif; }
.cmd { position: absolute; left: 311px; bottom: 1px; width: 221px; height: 23px; display: flex; align-items: center; background: linear-gradient(#666, #303030); border-radius: 2px; }
.grip { margin: 0 5px 0 2px; }
.cmd button { margin-right: 7px; }
.cmd-field { flex: 1; align-self: stretch; min-width: 0; display: flex; align-items: center; padding: 0 4px; background: #b4b4b4; border-radius: 0 2px 2px 0; }
.cmd-field input { flex: 1; min-width: 0; border: 0; padding: 0 5px; background: none; color: #111; font: bold 11px/14px "DejaVu Sans Mono", monospace; }
.blot { position: absolute; right: 24px; bottom: -23px; z-index: 2; }

/* Layout tabs and status bar */
.bottom { flex: none; background: #393939; border-top: 1px solid #4b4b4b; }
.layouts { display: flex; height: 17px; gap: 2px; padding-left: 9px; }
.layouts button { width: 45px; height: 16px; background: #4b4b4b; color: #aaa; clip-path: polygon(0 0, 100% 0, 94% 40%, 88% 85%, 80% 100%, 20% 100%, 12% 85%, 6% 40%); }
.layouts .active { background: linear-gradient(#555, #7d7d7d); color: #fff; font-weight: bold; }
.layouts .plus { width: 20px; margin-left: 3px; }
.status { height: 24px; margin-left: 189px; display: flex; align-items: stretch; border: 1px solid #777; background: #4a4a4a; white-space: nowrap; }
.status > * { flex: none; }
.status button { width: 22px; }
.status .n { width: 20px; }
.status .car { width: 14px; }
.status .on { width: 20px; margin: 1px; background: #4f8cc5; }
.status > i { width: 1px; background: #6c6c6c; }
.coords { width: 161px; padding-right: 4px; text-align: right; font-size: 10px; line-height: 22px; color: #fff; border-right: 1px solid #6c6c6c; }
.status .model { width: 28px; color: #fff; font-weight: 500; }
.scale { width: 50px; text-align: right; font-size: 10px; line-height: 22px; color: #fff; }
.status .end { margin-left: auto; display: flex; border-left: 1px solid #6c6c6c; }
```
